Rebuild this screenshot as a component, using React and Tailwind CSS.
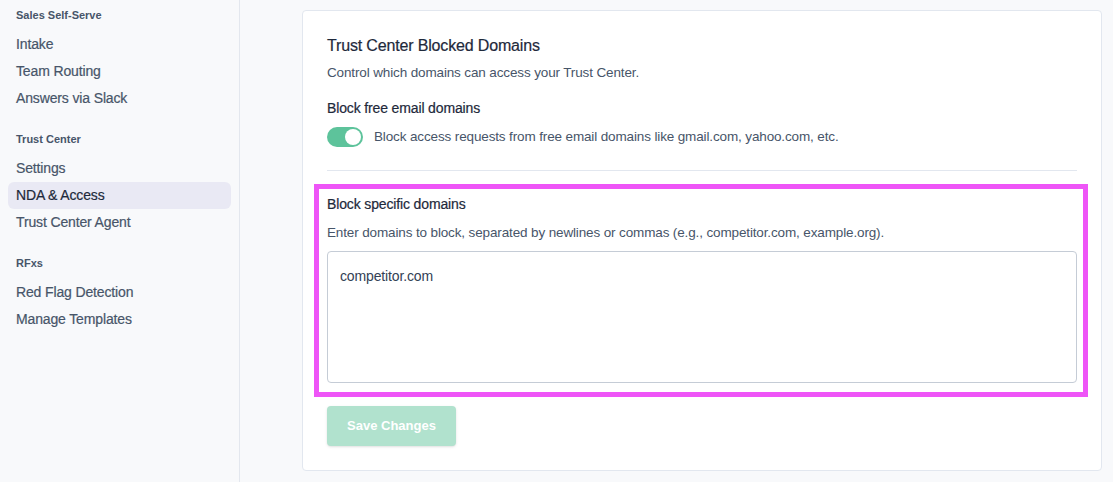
import React, { useState } from 'react';

const sections = [
  { title: 'Sales Self-Serve', items: ['Intake', 'Team Routing', 'Answers via Slack'] },
  { title: 'Trust Center', items: ['Settings', 'NDA & Access', 'Trust Center Agent'] },
  { title: 'RFxs', items: ['Red Flag Detection', 'Manage Templates'] },
];

const Sidebar = () => (
  <aside className="w-[240px] shrink-0 border-r border-[#e3e7ee] bg-[#f8f9fb] px-2 pt-[6px]">
    {sections.map((section) => (
      <div key={section.title} className="mb-[18px]">
        <div className="px-2 py-[2px] text-[11px] font-semibold leading-[14px] text-[#475569]">{section.title}</div>
        <div className="mt-[7px]">
          {section.items.map((item) => {
            const active = item === 'NDA & Access';
            return (
              <div
                key={item}
                className={`rounded-md px-2 py-[3px] text-[14px] leading-[21px] tracking-[-0.01em] [-webkit-text-stroke:0.2px] ${
                  active ? 'bg-[#e9e9f4] text-[#1e293b]' : 'text-[#475569]'
                }`}
              >
                {item}
              </div>
            );
          })}
        </div>
      </div>
    ))}
  </aside>
);

export default function App() {
  const [blockFree, setBlockFree] = useState(true);
  const [domains, setDomains] = useState('competitor.com');

  return (
    <div className="flex h-[482px] overflow-hidden bg-[#f8f9fb] font-['Liberation_Sans',Arial,sans-serif]">
      <Sidebar />
      <main className="flex-1 pl-[62px] pr-[11px] pt-[10px]">
        <div className="rounded-[4px] border border-[#e2e7ef] bg-white px-6 pb-6 pt-[23px]">
          <h2 className="text-[16px] leading-6 tracking-[-0.01em] text-[#1e293b] [-webkit-text-stroke:0.2px]">
            Trust Center Blocked Domains
          </h2>
          <p className="mt-[3px] text-[13.5px] leading-6 tracking-[-0.01em] text-[#475569]">
            Control which domains can access your Trust Center.
          </p>

          <div className="mt-[13px] text-[14px] leading-5 tracking-[-0.01em] text-[#1e293b] [-webkit-text-stroke:0.2px]">
            Block free email domains
          </div>
          <div className="mt-[9px] flex items-center gap-[11px]">
            <button
              type="button"
              onClick={() => setBlockFree((v) => !v)}
              className={`flex h-5 w-9 items-center rounded-full p-[2px] ${blockFree ? 'justify-end bg-[#5dc39b]' : 'justify-start bg-[#cbd5e1]'}`}
            >
              <span className="h-4 w-4 rounded-full bg-white" />
            </button>
            <span className="text-[13.5px] leading-5 tracking-[-0.01em] text-[#475569]">
              Block access requests from free email domains like gmail.com, yahoo.com, etc.
            </span>
          </div>

          <div className="mt-[23px] border-t border-[#e2e7ef]" />

          <div className="relative mt-[23px]">
            <div className="pointer-events-none absolute -left-[13px] -right-[11px] -top-[10px] -bottom-[14px] border-[5px] border-[#ee55f7]" />
            <div className="text-[14px] leading-5 tracking-[-0.01em] text-[#1e293b] [-webkit-text-stroke:0.2px]">
              Block specific domains
            </div>
            <p className="mt-[9px] text-[13.5px] leading-5 tracking-[-0.01em] text-[#475569]">
              Enter domains to block, separated by newlines or commas (e.g., competitor.com, example.org).
            </p>
            <textarea
              value={domains}
              onChange={(event) => setDomains(event.target.value)}
              className="mt-[8px] block h-[132px] w-full resize-none rounded-[4px] border border-[#c5ccd6] px-3 py-[14px] text-[14px] leading-5 tracking-[-0.01em] text-[#334155] outline-none"
            />
          </div>

          <button
            type="button"
            className="mt-[23px] h-10 w-[129px] rounded-[4px] bg-[#b1e2ce] text-[13px] font-semibold text-white shadow-sm"
          >
            Save Changes
          </button>
        </div>
      </main>
    </div>
  );
}
